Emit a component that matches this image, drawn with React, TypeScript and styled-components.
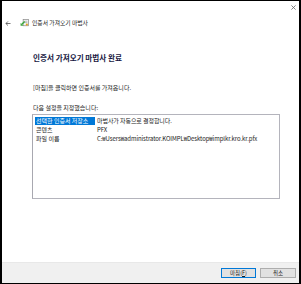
import React from "react";
import styled, { createGlobalStyle } from "styled-components";

const GlobalStyle = createGlobalStyle`
  html, body {
    margin: 0;
    padding: 0;
    background: #ffffff;
  }
  body {
    font-family: "Noto Sans CJK KR", "Noto Sans", sans-serif;
    color: #000000;
  }
`;

const rows = [
  { label: "선택한 인증서 저장소", value: "마법사가 자동으로 결정합니다.", selected: true },
  { label: "콘텐츠", value: "PFX", selected: false },
  {
    label: "파일 이름",
    value: "C:₩Users₩administrator.KOIMPL₩Desktop₩implkr.kro.kr.pfx",
    selected: false,
  },
];

const App = () => {
  return (
    <>
      <GlobalStyle />
      <SWindow>
        <SCaption>
          <SCloseIcon viewBox="0 0 6 6">
            <path d="M0.5 0.5 L5.5 5.5 M5.5 0.5 L0.5 5.5" />
          </SCloseIcon>
        </SCaption>
        <SNavRow>
          <SBackIcon viewBox="0 0 7 6">
            <path d="M6.5 3 H1 M3.5 0.5 L1 3 L3.5 5.5" />
          </SBackIcon>
          <SCertIcon viewBox="0 0 10 10">
            <rect x="3.5" y="0.5" width="6" height="7" fill="#f6f6f6" stroke="#8a8a8a" strokeWidth="0.8" />
            <path d="M5 2.5 H8.2 M5 4 H8.2" stroke="#9a9a9a" strokeWidth="0.7" />
            <circle cx="7.6" cy="6.2" r="1.2" fill="#e3a21a" />
            <path d="M5.2 2.8 L1.8 6.2" stroke="#3aa63a" strokeWidth="1.6" />
            <path d="M0.6 4.4 V7.6 H3.8 Z" fill="#3aa63a" />
          </SCertIcon>
          <STitle>인증서 가져오기 마법사</STitle>
        </SNavRow>

        <SContent>
          <SHeading>인증서 가져오기 마법사 완료</SHeading>
          <SText $gap={21}>[마침]을 클릭하면 인증서를 가져옵니다.</SText>
          <SText $gap={12}>다음 설정을 지정했습니다:</SText>
          <SListBox>
            {rows.map((row, idx) => (
              <SRow key={idx}>
                <SLabel $selected={row.selected}>{row.label}</SLabel>
                <SValue>{row.value}</SValue>
              </SRow>
            ))}
          </SListBox>
        </SContent>

        <SFooter>
          <SButton $primary>
            마침(<u>F</u>)
          </SButton>
          <SButton>취소</SButton>
        </SFooter>
      </SWindow>
    </>
  );
};

export default App;

const SWindow = styled.div`
  width: 301px;
  height: 284px;
  box-sizing: border-box;
  border-top: 1px solid #000;
  border-bottom: 1px solid #000;
  border-left: 2px solid #000;
  border-right: 2px solid #000;
  display: flex;
  flex-direction: column;
  background: #fff;
  overflow: hidden;
`;

const SCaption = styled.div`
  height: 12px;
  display: flex;
  align-items: center;
  justify-content: flex-end;
  padding-right: 3px;
`;

const SCloseIcon = styled.svg`
  width: 5px;
  height: 5px;
  fill: none;
  stroke: #6a6a6a;
  stroke-width: 1;
`;

const SNavRow = styled.div`
  height: 20px;
  display: flex;
  align-items: center;
  padding-left: 3px;
`;

const SBackIcon = styled.svg`
  width: 6px;
  height: 5px;
  fill: none;
  stroke: #444;
  stroke-width: 0.9;
  margin-right: 9px;
`;

const SCertIcon = styled.svg`
  width: 9px;
  height: 9px;
  margin-right: 3px;
`;

const STitle = styled.span`
  font-size: 5.8px;
  line-height: 8px;
  color: #1a1a1a;
`;

const SContent = styled.div`
  flex: 1;
  display: flex;
  flex-direction: column;
  align-items: flex-start;
  padding-left: 30px;
`;

const SHeading = styled.div`
  margin-top: 20px;
  padding-left: 1px;
  font-size: 7.6px;
  line-height: 10px;
  font-weight: 700;
  color: #17173f;
`;

const SText = styled.div<{ $gap: number }>`
  margin-top: ${({ $gap }) => $gap}px;
  padding-left: 1px;
  font-size: 6px;
  line-height: 8px;
  color: #1a1a1a;
`;

const SListBox = styled.div`
  margin-top: 2px;
  width: 248px;
  height: 85px;
  box-sizing: border-box;
  border: 1px solid #b4b4bc;
  border-left-color: #a8a8b0;
  padding: 2px 0 0 2px;
  display: flex;
  flex-direction: column;
`;

const SRow = styled.div`
  height: 9px;
  display: flex;
  align-items: flex-start;
`;

const SLabel = styled.div<{ $selected: boolean }>`
  width: 60px;
  height: 8px;
  margin-right: 2px;
  padding-left: 1px;
  box-sizing: border-box;
  font-size: 6px;
  line-height: 8px;
  white-space: nowrap;
  overflow: hidden;
  background: ${({ $selected }) => ($selected ? "#0078d7" : "transparent")};
  color: ${({ $selected }) => ($selected ? "#ffffff" : "#1a1a1a")};
`;

const SValue = styled.div`
  font-size: 6px;
  line-height: 8px;
  white-space: nowrap;
  letter-spacing: -0.08px;
  color: #1a1a1a;
`;

const SFooter = styled.div`
  height: 21px;
  box-sizing: border-box;
  background: #f0f0f0;
  border-top: 1px solid #e8e8e8;
  display: flex;
  justify-content: flex-end;
  align-items: flex-start;
  gap: 4px;
  padding: 5px 3px 0 0;
`;

const SButton = styled.button<{ $primary?: boolean }>`
  width: ${({ $primary }) => ($primary ? 35 : 36)}px;
  height: 10px;
  padding: 0;
  box-sizing: border-box;
  background: #e1e1e1;
  border: 1px solid ${({ $primary }) => ($primary ? "#0078d7" : "#adadad")};
  font-family: "Noto Sans CJK KR", "Noto Sans", sans-serif;
  font-size: 5.5px;
  line-height: 8px;
  color: #1a1a1a;
  display: flex;
  align-items: center;
  justify-content: center;

  u {
    text-decoration: underline;
  }
`;
